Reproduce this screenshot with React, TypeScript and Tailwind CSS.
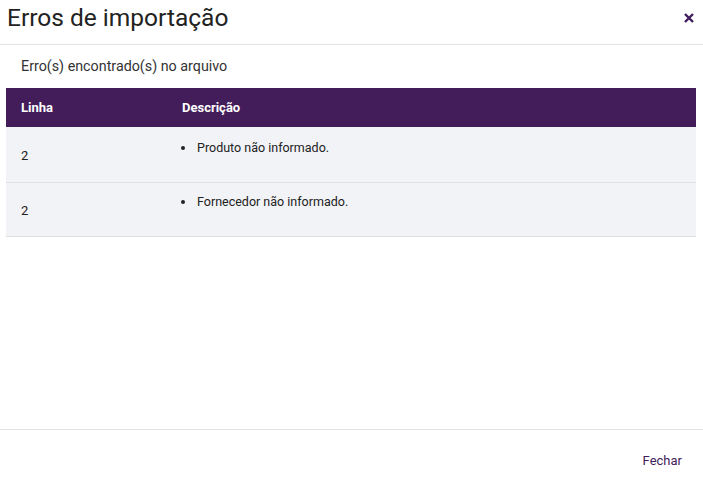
import React from "react";

const rows = [
  { linha: "2", desc: "Produto não informado.", h: "h-[56px]", pt: "pt-[12px]" },
  { linha: "2", desc: "Fornecedor não informado.", h: "h-[54px]", pt: "pt-[10px]" },
];

export default function App() {
  return (
    <div
      className="w-[703px] h-[482px] bg-white flex flex-col overflow-hidden"
      style={{ fontFamily: "Roboto, 'Liberation Sans', sans-serif" }}
    >
      <div className="h-[45px] border-b border-[#e3e3e3] flex items-center justify-between pl-[7px] pr-[8px] shrink-0">
        <h1 className="text-[24.5px] leading-[28px] text-[#222] font-normal -mt-[8px]">
          Erros de importação
        </h1>
        <button className="w-[12px] h-[12px] flex items-center justify-center -mt-[9px]">
          <svg width="10" height="10" viewBox="0 0 10 10">
            <path d="M1 1 L9 9 M9 1 L1 9" stroke="#3f1d5c" strokeWidth="2.4" strokeLinecap="butt" />
          </svg>
        </button>
      </div>
      <div className="flex-1 px-[6px] pt-[11px]">
        <p className="pl-[15px] text-[14.3px] leading-[20px] text-[#333]">Erro(s) encontrado(s) no arquivo</p>
        <div className="mt-[12px] w-[690px]">
          <div className="h-[39px] bg-[#431d5a] flex items-center text-white text-[13px] font-bold">
            <div className="w-[176px] pl-[15px]">Linha</div>
            <div className="flex-1">Descrição</div>
          </div>
          {rows.map((r, i) => (
            <div key={i} className={`${r.h} bg-[#f2f3f7] border-b border-[#e0e0e0] flex text-[12.5px] text-[#222]`}>
              <div className="w-[176px] pl-[15px] flex items-center text-[13px] pt-[2px]">{r.linha}</div>
              <div className={`flex-1 ${r.pt}`}>
                <div className="flex items-center h-[18px]">
                  <span className="w-[4px] h-[4px] rounded-full bg-[#222] ml-[-1px]" />
                  <span className="ml-[12px]">{r.desc}</span>
                </div>
              </div>
            </div>
          ))}
        </div>
      </div>
      <div className="h-[53px] border-t border-[#e3e3e3] flex items-center justify-end pr-[21px] shrink-0">
        <button className="text-[13px] text-[#431d5a] mt-[10px]">Fechar</button>
      </div>
    </div>
  );
}
